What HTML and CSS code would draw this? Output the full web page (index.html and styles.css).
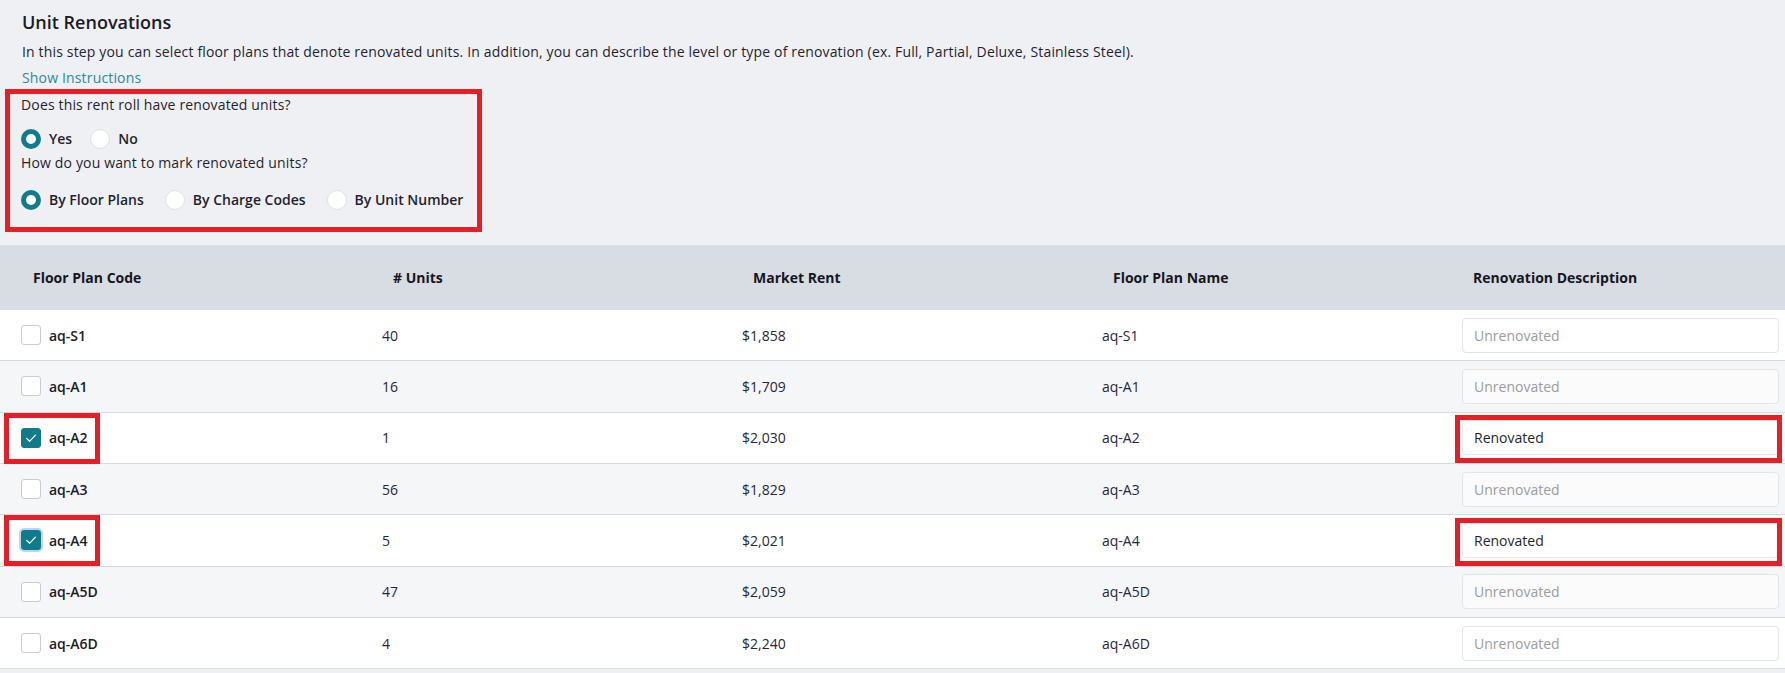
FILE: index.html
```html
<!DOCTYPE html>
<html lang="en">
<head>
<meta charset="utf-8">
<title>Unit Renovations</title>
<link rel="stylesheet" href="styles.css">
</head>
<body>
<div class="intro">
  <h1 class="title">Unit Renovations</h1>
  <p class="desc">In this step you can select floor plans that denote renovated units. In addition, you can describe the level or type of renovation (ex. Full, Partial, Deluxe, Stainless Steel).</p>
  <a class="link" href="#">Show Instructions</a>
</div>

<section class="settings">
  <div class="q">Does this rent roll have renovated units?</div>
  <div class="radios first">
    <label class="radio"><span class="dot on"></span>Yes</label>
    <label class="radio"><span class="dot"></span>No</label>
  </div>
  <div class="q">How do you want to mark renovated units?</div>
  <div class="radios second">
    <label class="radio"><span class="dot on"></span>By Floor Plans</label>
    <label class="radio"><span class="dot"></span>By Charge Codes</label>
    <label class="radio"><span class="dot"></span>By Unit Number</label>
  </div>
</section>

<div class="table">
  <div class="thead">
    <div>Floor Plan Code</div>
    <div># Units</div>
    <div>Market Rent</div>
    <div>Floor Plan Name</div>
    <div>Renovation Description</div>
  </div>

  <div class="tr">
    <div class="code"><span class="cb"></span>aq-S1</div>
    <div>40</div>
    <div>$1,858</div>
    <div>aq-S1</div>
    <div><input class="inp" type="text" placeholder="Unrenovated"></div>
  </div>
  <div class="tr alt">
    <div class="code"><span class="cb"></span>aq-A1</div>
    <div>16</div>
    <div>$1,709</div>
    <div>aq-A1</div>
    <div><input class="inp" type="text" placeholder="Unrenovated"></div>
  </div>
  <div class="tr">
    <span class="mark-code"></span>
    <div class="code"><span class="cb checked"><svg viewBox="0 0 20 20" width="20" height="20"><path d="M5.6 10.4 L8.6 13.3 L14.4 7.2" fill="none" stroke="#fff" stroke-width="1.2" stroke-linecap="round" stroke-linejoin="round"/></svg></span>aq-A2</div>
    <div>1</div>
    <div>$2,030</div>
    <div>aq-A2</div>
    <div class="inp-wrap marked"><input class="inp filled" type="text" value="Renovated"></div>
  </div>
  <div class="tr alt">
    <div class="code"><span class="cb"></span>aq-A3</div>
    <div>56</div>
    <div>$1,829</div>
    <div>aq-A3</div>
    <div><input class="inp" type="text" placeholder="Unrenovated"></div>
  </div>
  <div class="tr">
    <span class="mark-code"></span>
    <div class="code"><span class="cb checked focus"><svg viewBox="0 0 20 20" width="20" height="20"><path d="M5.6 10.4 L8.6 13.3 L14.4 7.2" fill="none" stroke="#fff" stroke-width="1.2" stroke-linecap="round" stroke-linejoin="round"/></svg></span>aq-A4</div>
    <div>5</div>
    <div>$2,021</div>
    <div>aq-A4</div>
    <div class="inp-wrap marked"><input class="inp filled" type="text" value="Renovated"></div>
  </div>
  <div class="tr alt">
    <div class="code"><span class="cb"></span>aq-A5D</div>
    <div>47</div>
    <div>$2,059</div>
    <div>aq-A5D</div>
    <div><input class="inp" type="text" placeholder="Unrenovated"></div>
  </div>
  <div class="tr">
    <div class="code"><span class="cb"></span>aq-A6D</div>
    <div>4</div>
    <div>$2,240</div>
    <div>aq-A6D</div>
    <div><input class="inp" type="text" placeholder="Unrenovated"></div>
  </div>
</div>
</body>
</html>
```

FILE: styles.css
```css
html, body {
  margin: 0;
  padding: 0;
}
body {
  background: #eff0f4;
  font-family: "Open Sans", "Noto Sans", sans-serif;
  color: #1f1f2e;
  overflow: hidden;
}

.intro {
  padding: 10px 0 0 22px;
}
.title {
  margin: 0;
  font-size: 18px;
  font-weight: 600;
  line-height: 24px;
  color: #1b1b26;
}
.desc {
  margin: 8px 0 0;
  font-size: 14px;
  letter-spacing: 0.16px;
  line-height: 20px;
}
.link {
  display: inline-block;
  margin-top: 6px;
  font-size: 14px;
  letter-spacing: 0.16px;
  line-height: 20px;
  color: #2a8a99;
  text-decoration: none;
}

.settings {
  margin: 1px 0 0 5px;
  width: 477px;
  box-sizing: border-box;
  border: 5px solid #e61e25;
  padding: 1px 0 17px 11px;
}
.q {
  font-size: 14px;
  letter-spacing: 0.15px;
  line-height: 20px;
}
.radios {
  display: flex;
}
.radios.first {
  gap: 18px;
  margin: 14px 0 4px;
}
.radios.second {
  gap: 21px;
  margin: 17px 0 0;
}
.radio {
  display: flex;
  align-items: center;
  flex-shrink: 0;
  white-space: nowrap;
  gap: 8px;
  font-size: 14px;
  font-weight: 600;
  line-height: 20px;
}
.dot {
  flex-shrink: 0;
  width: 20px;
  height: 20px;
  border-radius: 50%;
  box-sizing: border-box;
  background: #fff;
  border: 1px solid #dcdfe4;
}
.dot.on {
  border: 5px solid #0f7b8b;
}

.table {
  margin-top: 13px;
}
.thead {
  display: grid;
  grid-template-columns: 360px 360px 360px 360px 1fr;
  align-items: center;
  height: 65px;
  padding-left: 33px;
  background: #d8dce3;
  font-size: 14px;
  font-weight: 700;
  color: #16161e;
}
.tr {
  position: relative;
  display: grid;
  grid-template-columns: 361px 360px 360px 360px 1fr;
  align-items: center;
  height: 51.33px;
  box-sizing: border-box;
  padding: 0 6px 0 21px;
  background: #fff;
  border-bottom: 1px solid #d6dae0;
  font-size: 14px;
  color: #26263a;
}
.tr.alt {
  background: #f5f6f8;
}
.code {
  display: flex;
  align-items: center;
  gap: 8px;
  font-weight: 600;
  color: #1b1b26;
}
.cb {
  flex-shrink: 0;
  width: 20px;
  height: 20px;
  box-sizing: border-box;
  border: 1px solid #c7cbd2;
  border-radius: 3px;
  background: #fff;
  display: block;
}
.cb svg {
  display: block;
  margin: -1px;
}
.cb.checked {
  background: #0f7b8b;
  border-color: #0f7b8b;
}
.cb.focus {
  box-shadow: 0 0 0 2px #bad6f4;
}

.inp {
  display: block;
  width: 100%;
  height: 35px;
  box-sizing: border-box;
  border: 1px solid #e2e4e8;
  border-radius: 4px;
  padding: 0 11px;
  font-family: "Open Sans", "Noto Sans", sans-serif;
  font-size: 14px;
  color: #1f1f2e;
  background: rgba(255, 255, 255, 0.55);
  outline: none;
}
.inp::placeholder {
  color: #9c9c9c;
}
.inp.filled {
  background: #fff;
}
.inp-wrap {
  position: relative;
}
.inp-wrap.marked::after {
  content: "";
  position: absolute;
  left: -7px;
  right: -3px;
  top: -5px;
  bottom: -8px;
  border: 5px solid #e61e25;
  pointer-events: none;
}
.mark-code {
  position: absolute;
  left: 4px;
  top: 0;
  width: 96px;
  height: 51px;
  box-sizing: border-box;
  border: 5px solid #e61e25;
  pointer-events: none;
}
```
